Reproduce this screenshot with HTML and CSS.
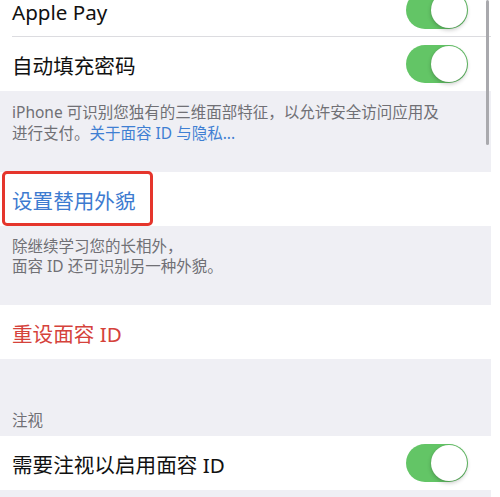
FILE: index.html
```html
<!DOCTYPE html>
<html lang="zh-CN">
<head>
<meta charset="utf-8">
<link rel="stylesheet" href="styles.css">
</head>
<body>
<div class="screen">
  <div class="group first">
    <div class="row sep">
      <span class="label">Apple Pay</span>
      <span class="toggle"><span class="knob"></span></span>
    </div>
    <div class="row">
      <span class="label">自动填充密码</span>
      <span class="toggle"><span class="knob"></span></span>
    </div>
  </div>
  <div class="footer f1">iPhone 可识别您独有的三维面部特征，以允许安全访问应用及<br>进行支付。<span class="link">关于面容 ID 与隐私...</span></div>
  <div class="group">
    <div class="row marked">
      <span class="label blue">设置替用外貌</span>
      <span class="mark"></span>
    </div>
  </div>
  <div class="footer f2">除继续学习您的长相外，<br>面容 ID 还可识别另一种外貌。</div>
  <div class="group">
    <div class="row">
      <span class="label red">重设面容 ID</span>
    </div>
  </div>
  <div class="header">注视</div>
  <div class="group">
    <div class="row">
      <span class="label">需要注视以启用面容 ID</span>
      <span class="toggle"><span class="knob"></span></span>
    </div>
  </div>
  <div class="tail"></div>
  <div class="scrollbar"></div>
</div>
</body>
</html>
```

FILE: styles.css
```css
html, body {
  margin: 0;
  padding: 0;
  background: #ffffff;
}
body {
  font-family: "Noto Sans", "Noto Sans CJK SC", sans-serif;
  width: 500px;
  height: 497px;
  overflow: hidden;
}
.screen {
  position: relative;
  width: 491px;
  background: #efeff4;
  display: flex;
  flex-direction: column;
}
.group {
  background: #ffffff;
  display: flex;
  flex-direction: column;
}
.group.first {
  margin-top: -17px;
}
.row {
  position: relative;
  height: 54px;
  display: flex;
  align-items: center;
  justify-content: space-between;
  padding: 0 23px 0 12px;
}
.row.sep::after {
  content: "";
  position: absolute;
  left: 12px;
  right: 0;
  bottom: 0;
  height: 1px;
  background: #dcdce0;
}
.label {
  font-family: "Noto Sans", "Noto Sans CJK SC", sans-serif;
  font-size: 20.6px;
  line-height: 24px;
  padding-top: 4px;
  color: #111111;
}
.label.blue { color: #3d7bd0; }
.label.red { color: #d5423b; }
.toggle {
  width: 62px;
  height: 38px;
  border-radius: 19px;
  background: #63c566;
  display: flex;
  align-items: center;
  justify-content: flex-end;
  padding: 0 1px;
  box-sizing: border-box;
}
.knob {
  width: 36px;
  height: 36px;
  border-radius: 50%;
  background: #ffffff;
  box-shadow: 0 2px 4px rgba(0, 0, 0, 0.22), 0 0 1px rgba(0, 0, 0, 0.2);
}
.footer {
  font-size: 15.5px;
  color: #707075;
  padding: 0 12px;
  white-space: nowrap;
}
.footer.f1 {
  line-height: 21px;
  padding-top: 11px;
  padding-bottom: 28px;
  height: 42px;
}
.footer.f2 {
  line-height: 20px;
  padding-top: 10px;
  padding-bottom: 29px;
  height: 40px;
}
.link { color: #3f7fd3; }
.header {
  font-size: 15.5px;
  line-height: 20px;
  color: #707075;
  padding: 51px 12px 6px;
}
.tail { height: 10px; }
.mark {
  position: absolute;
  left: 2px;
  top: -1px;
  width: 151px;
  height: 55px;
  border: 3px solid #e5352c;
  border-radius: 5px;
  box-sizing: border-box;
}
.scrollbar {
  position: absolute;
  left: 486px;
  top: 0;
  width: 3px;
  height: 145px;
  border-radius: 2px;
  background: #a9a9ad;
}
```
